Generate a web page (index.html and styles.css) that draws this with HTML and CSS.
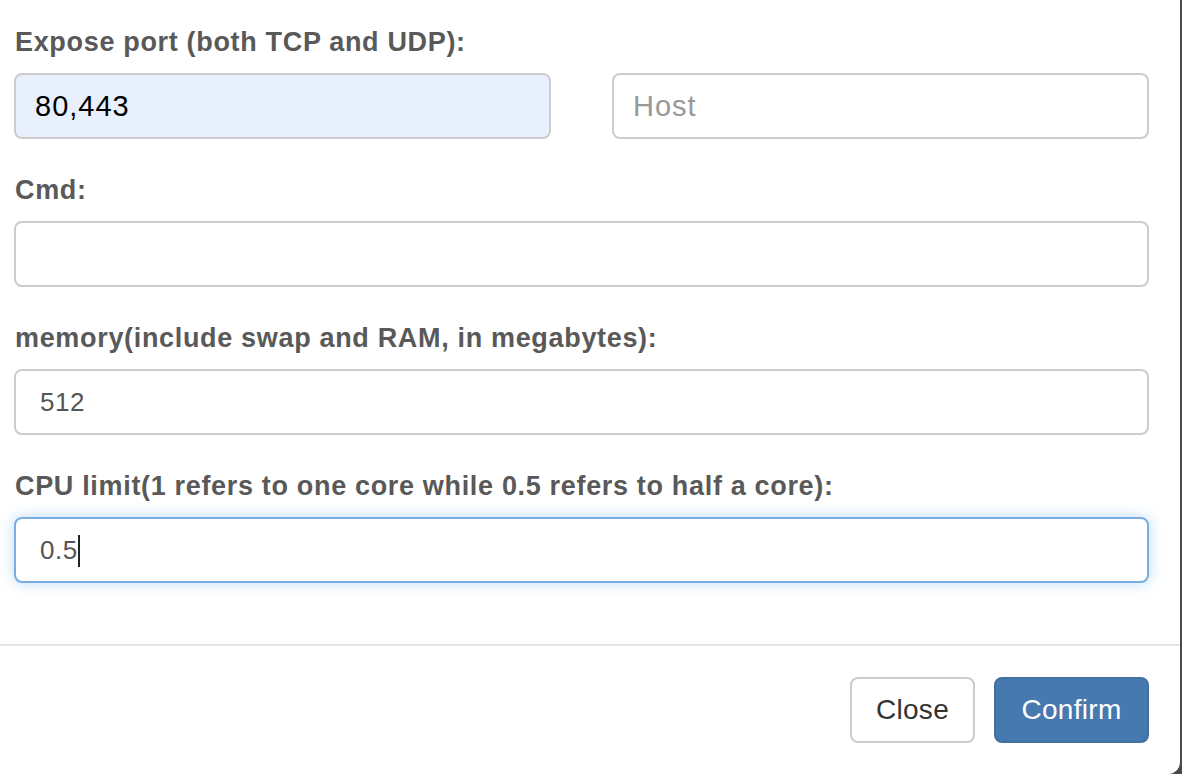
FILE: index.html
```html
<!DOCTYPE html>
<html lang="en">
<head>
<meta charset="utf-8">
<title>Container settings</title>
<link rel="stylesheet" href="styles.css">
</head>
<body>
<div class="modal">
  <div class="modal-body">
    <div class="form-group">
      <div class="label">Expose port (both TCP and UDP):</div>
      <div class="row">
        <div class="field field-tight autofill">80,443</div>
        <div class="field field-tight"><span class="placeholder">Host</span></div>
      </div>
    </div>
    <div class="form-group">
      <div class="label">Cmd:</div>
      <div class="field"></div>
    </div>
    <div class="form-group">
      <div class="label">memory(include swap and RAM, in megabytes):</div>
      <div class="field">512</div>
    </div>
    <div class="form-group">
      <div class="label">CPU limit(1 refers to one core while 0.5 refers to half a core):</div>
      <div class="field focused">0.5<span class="caret"></span></div>
    </div>
  </div>
  <div class="modal-footer">
    <div class="btn btn-default">Close</div>
    <div class="btn btn-primary">Confirm</div>
  </div>
</div>
</body>
</html>
```

FILE: styles.css
```css
html, body {
  margin: 0;
  padding: 0;
}

body {
  background: #4a4a4a;
  font-family: "Liberation Sans", Arial, Helvetica, sans-serif;
  width: 1182px;
  height: 774px;
  overflow: hidden;
}

.modal {
  width: 1180px;
  height: 774px;
  background: #fff;
  border-radius: 0 0 12px 0;
  display: flex;
  flex-direction: column;
}

.modal-body {
  padding: 22px 31px 30px 14px;
}

.form-group {
  margin-bottom: 31px;
}

.label {
  font-size: 27px;
  font-weight: bold;
  line-height: 40px;
  letter-spacing: 0.67px;
  color: #595959;
  margin-bottom: 11px;
  padding-left: 1px;
}

.row {
  display: grid;
  grid-template-columns: 1fr 1fr;
  column-gap: 61px;
}

.field {
  box-sizing: border-box;
  height: 66px;
  border: 2px solid #ccc;
  border-radius: 8px;
  padding: 0 24px;
  font-size: 26px;
  letter-spacing: 0.5px;
  line-height: 62px;
  color: #555;
  background: #fff;
  white-space: nowrap;
}

.field-tight {
  padding: 0 19px;
  font-size: 29px;
  letter-spacing: 1px;
}

.autofill {
  background: #e8f0fe;
  color: #000;
}

.placeholder {
  color: #999;
}

.focused {
  border-color: #7aaee2;
  box-shadow: 0 0 14px rgba(102, 175, 233, 0.45);
}

.caret {
  display: inline-block;
  width: 2px;
  height: 32px;
  background: #222;
  vertical-align: middle;
  margin-left: 0;
  position: relative;
  top: -1px;
}

.modal-footer {
  border-top: 2px solid #e5e5e5;
  padding: 31px 31px 31px 14px;
  display: flex;
  justify-content: flex-end;
  gap: 19px;
}

.btn {
  box-sizing: border-box;
  height: 66px;
  border-radius: 8px;
  font-size: 28px;
  letter-spacing: 0.3px;
  line-height: 62px;
  border: 2px solid transparent;
  text-align: center;
}

.btn-default {
  width: 125px;
  border-color: #ccc;
  color: #333;
  background: #fff;
}

.btn-primary {
  width: 155px;
  background: #4679af;
  border-color: #42719f;
  color: #fff;
}
```
